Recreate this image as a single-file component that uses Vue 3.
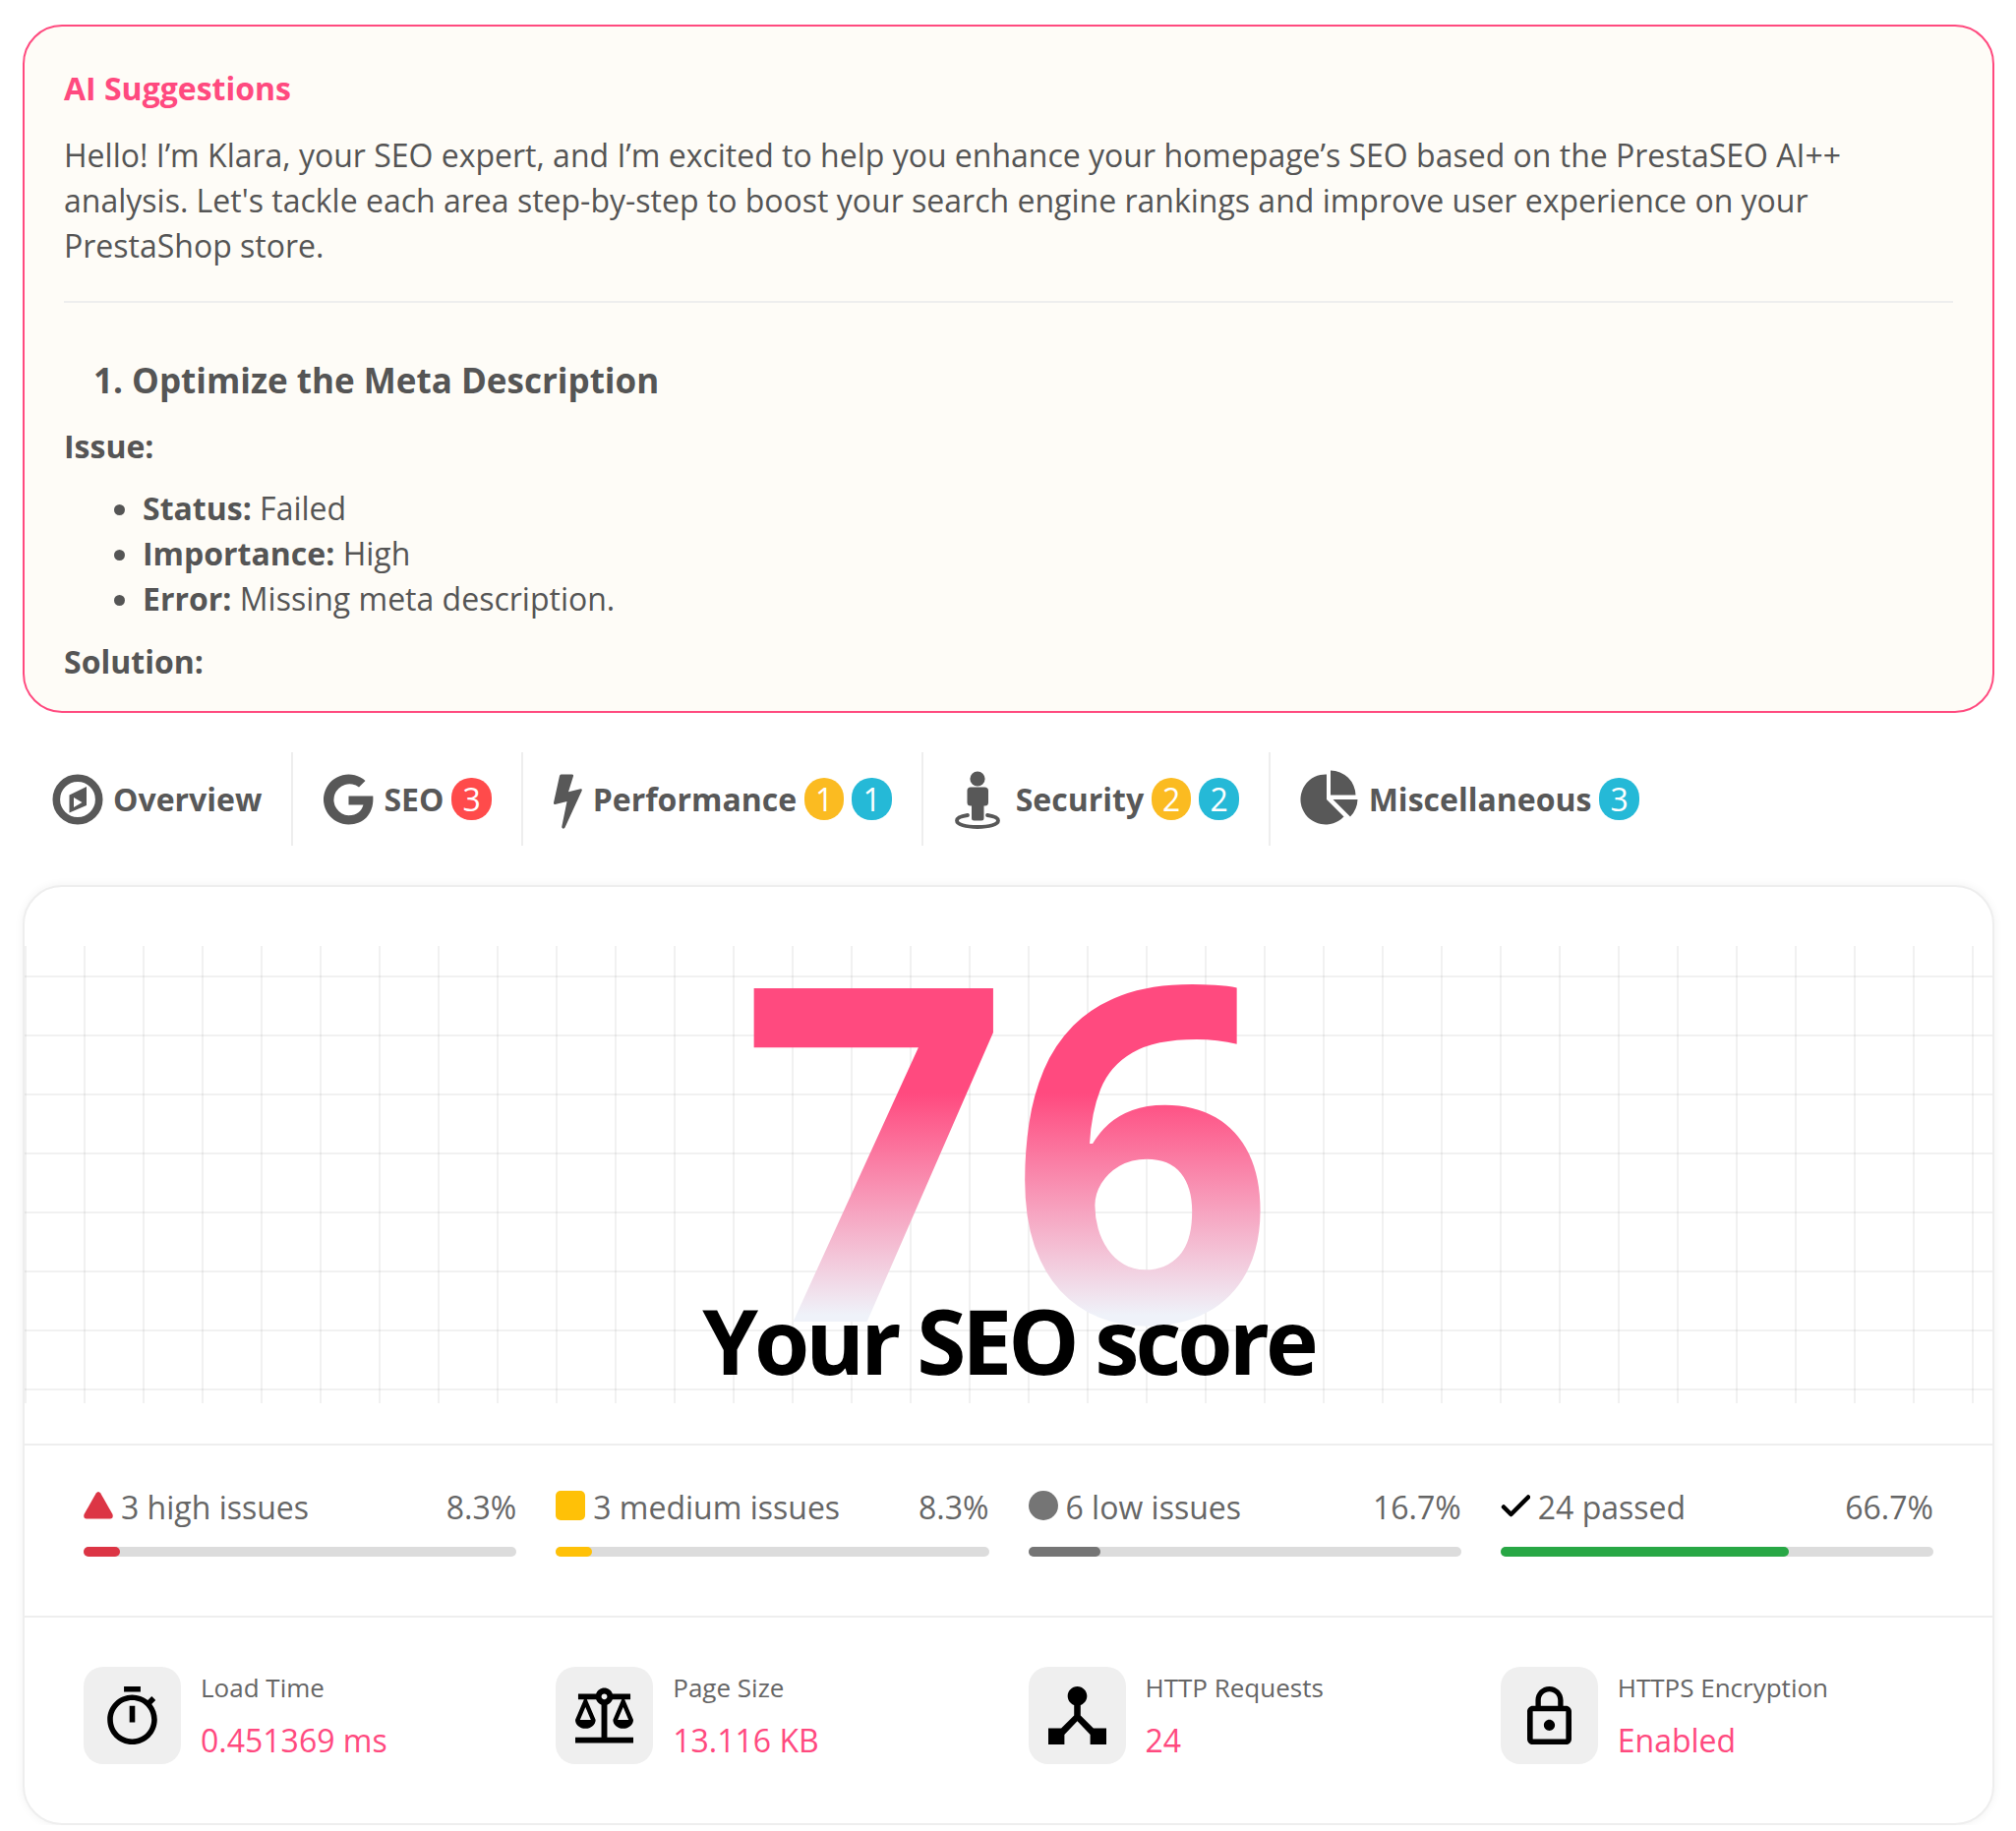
<script setup>
const facts = [
  { label: 'Status:', value: 'Failed' },
  { label: 'Importance:', value: 'High' },
  { label: 'Error:', value: 'Missing meta description.' },
]

const tabs = [
  { name: 'Overview', icon: 'compass', badges: [] },
  { name: 'SEO', icon: 'google', badges: [{ tone: 'red', count: 3 }] },
  { name: 'Performance', icon: 'bolt', badges: [{ tone: 'amber', count: 1 }, { tone: 'cyan', count: 1 }] },
  { name: 'Security', icon: 'person', badges: [{ tone: 'amber', count: 2 }, { tone: 'cyan', count: 2 }] },
  { name: 'Miscellaneous', icon: 'pie', badges: [{ tone: 'cyan', count: 3 }] },
]

const issues = [
  { key: 'high', label: '3 high issues', percent: 8.3 },
  { key: 'medium', label: '3 medium issues', percent: 8.3 },
  { key: 'low', label: '6 low issues', percent: 16.7 },
  { key: 'passed', label: '24 passed', percent: 66.7 },
]

const metrics = [
  {
    label: 'Load Time',
    value: '0.451369 ms',
    box: '1.5 1 21 21',
    path: 'M15 1H9v2h6V1zm-4 13h2V8h-2v6zm8.03-6.61l1.42-1.42c-.43-.51-.9-.99-1.41-1.41l-1.42 1.42C16.07 4.74 14.12 4 12 4c-4.97 0-9 4.03-9 9s4.02 9 9 9 9-4.03 9-9c0-2.12-.74-4.07-1.97-5.61zM12 20c-3.87 0-7-3.13-7-7s3.13-7 7-7 7 3.13 7 7-3.13 7-7 7z',
  },
  {
    label: 'Page Size',
    value: '13.116 KB',
    box: '2 1.5 20 20',
    path: 'M13 7.83c.85-.3 1.53-.98 1.83-1.83H18l-3 7c0 1.66 1.57 3 3.5 3s3.5-1.34 3.5-3l-3-7h2V4h-6.17c-.41-1.17-1.52-2-2.83-2s-2.42.83-2.83 2H3v2h2l-3 7c0 1.66 1.57 3 3.5 3S9 14.66 9 13L6 6h3.17c.3.85.98 1.53 1.83 1.83V19H2v2h20v-2h-9V7.83zM20.37 13h-3.74l1.87-4.36L20.37 13zm-13 0H3.63L5.5 8.64 7.37 13zM12 6c-.55 0-1-.45-1-1s.45-1 1-1 1 .45 1 1-.45 1-1 1z',
  },
  {
    label: 'HTTP Requests',
    value: '24',
    box: '3 3 18 18',
    path: 'M17 16l-4-4V8.82C14.16 8.4 15 7.3 15 6c0-1.66-1.34-3-3-3S9 4.34 9 6c0 1.3.84 2.4 2 2.82V12l-4 4H3v5h5v-3.05l4-4.2 4 4.2V21h5v-5h-4z',
  },
  {
    label: 'HTTPS Encryption',
    value: 'Enabled',
    box: '1.5 1 21 21',
    path: 'M12 17c1.1 0 2-.9 2-2s-.9-2-2-2-2 .9-2 2 .9 2 2 2zm6-9h-1V6c0-2.76-2.24-5-5-5S7 3.24 7 6v2H6c-1.1 0-2 .9-2 2v10c0 1.1.9 2 2 2h12c1.1 0 2-.9 2-2V10c0-1.1-.9-2-2-2zM8.9 6c0-1.71 1.39-3.1 3.1-3.1s3.1 1.39 3.1 3.1v2H8.9V6zM18 20H6V10h12v10z',
  },
]
</script>

<template>
  <main class="page">
    <section class="suggestions">
      <h2>AI Suggestions</h2>
      <p>
        Hello! I’m Klara, your SEO expert, and I’m excited to help you enhance your homepage’s SEO
        based on the PrestaSEO AI++ analysis. Let's tackle each area step-by-step to boost your
        search engine rankings and improve user experience on your PrestaShop store.
      </p>
      <hr />
      <h3>1. Optimize the Meta Description</h3>
      <p><strong>Issue:</strong></p>
      <ul>
        <li v-for="fact in facts" :key="fact.label">
          <strong>{{ fact.label }}</strong> {{ fact.value }}
        </li>
      </ul>
      <p><strong>Solution:</strong></p>
    </section>

    <nav class="tabs">
      <button v-for="tab in tabs" :key="tab.name" type="button" class="tab">
        <svg v-if="tab.icon === 'compass'" class="icon" width="52" height="60" viewBox="0 0 52 60" aria-hidden="true">
          <circle cx="26" cy="30" r="21.7" fill="none" stroke="currentColor" stroke-width="7.6" />
          <path fill="currentColor" fill-rule="evenodd" d="M35 17v19L17.500 43.500V25.500zM22 28v10l8.500-5z" />
        </svg>
        <svg v-else-if="tab.icon === 'google'" class="icon" width="52" height="60" viewBox="0 0 52 60" aria-hidden="true">
          <path fill="currentColor" d="M26.500 26.500H51.300C52.500 43.500 43 55.500 26.500 55.500A25.500 25.500 0 1 1 43.500 11L37 17.500A16 16 0 1 0 26.500 46.300C35 46.300 39.500 42 41.500 35.500H26.500z" />
        </svg>
        <svg v-else-if="tab.icon === 'bolt'" class="icon" width="31" height="60" viewBox="0 0 31 60" aria-hidden="true">
          <path fill="currentColor" d="M8.500 4.500H19.800Q21.600 4.500 21 6.300L16 22.200L28.300 19.200Q30.500 18.800 29.700 20.900L12.500 58.600Q11.700 60 10.300 59.600Q9 59.200 9.300 57.600L14.500 32L2.500 35Q.6 35.300 1 33.300L7 6Q7.300 4.500 8.500 4.500z" />
        </svg>
        <svg v-else-if="tab.icon === 'person'" class="icon" width="54" height="60" viewBox="0 0 54 60" aria-hidden="true">
          <circle cx="25" cy="9" r="7.600" fill="currentColor" />
          <path fill="currentColor" d="M18 17.500H32Q36 17.500 36 21V33Q36 36.500 32.500 36.500H31.500V49Q31.500 51.500 29 51.500H21.500Q19 51.500 19 49V36.500H18Q14.500 36.500 14.500 33V21Q14.500 17.500 18 17.500z" />
          <path fill="none" stroke="currentColor" stroke-width="3.800" stroke-linecap="round" d="M15 46C8 47 4 49 4 51.500C4 55.500 13 58 25 58S46 55.500 46 51.500C46 49 42 47 35 46" />
        </svg>
        <svg v-else class="icon" width="60" height="60" viewBox="0 0 60 60" aria-hidden="true">
          <path fill="currentColor" d="M27 4.500V30L44.500 47.500A25.500 25.500 0 1 1 27 4.500zM31 .500A25.500 25.500 0 0 1 56.500 25.500H31zM33.500 30H58.500A26 26 0 0 1 51 47.500z" />
        </svg>
        <span>{{ tab.name }}<span v-for="badge in tab.badges" :key="badge.tone" class="badge" :class="badge.tone">{{ badge.count }}</span></span>
      </button>
    </nav>

    <section class="report">
      <div class="score">
        <div class="score-value">76</div>
        <h1>Your SEO score</h1>
      </div>

      <div class="issues">
        <div v-for="issue in issues" :key="issue.key" class="issue">
          <div class="issue-head">
            <svg v-if="issue.key === 'high'" width="30" height="30" viewBox="0 0 30 30" aria-hidden="true">
              <path fill="#dc3545" d="M12.700 2.500Q15 -.500 17.300 2.500L29.500 24Q30.500 28.500 27 28.500H3Q-.500 28.500 .500 24z" />
            </svg>
            <svg v-else-if="issue.key === 'medium'" width="30" height="30" viewBox="0 0 30 30" aria-hidden="true">
              <rect width="30" height="30" rx="5" fill="#ffc107" />
            </svg>
            <svg v-else-if="issue.key === 'low'" width="30" height="30" viewBox="0 0 30 30" aria-hidden="true">
              <circle cx="15" cy="15" r="15" fill="#757575" />
            </svg>
            <svg v-else width="30" height="30" viewBox="0 0 30 30" aria-hidden="true">
              <path fill="none" stroke="#000" stroke-width="4.500" stroke-linecap="round" stroke-linejoin="round" d="M3 16.500L10.500 24L28 6.500" />
            </svg>
            <span>{{ issue.label }}</span>
            <span class="percent">{{ issue.percent }}%</span>
          </div>
          <div class="bar">
            <div class="fill" :class="issue.key" :style="{ width: issue.percent + '%' }"></div>
          </div>
        </div>
      </div>

      <div class="metrics">
        <div v-for="metric in metrics" :key="metric.label" class="metric">
          <div class="metric-icon">
            <svg width="59" height="59" :viewBox="metric.box" aria-hidden="true"><path :d="metric.path" /></svg>
          </div>
          <div>
            <div class="metric-label">{{ metric.label }}</div>
            <div class="metric-value">{{ metric.value }}</div>
          </div>
        </div>
      </div>
    </section>
  </main>
</template>

<style>
body {
  margin: 0;
  background: #fff;
}
</style>

<style scoped>
.page {
  box-sizing: border-box;
  padding: 25px 22px 0 23px;
  font-family: "Open Sans", "Noto Sans", sans-serif;
  font-size: 32px;
  line-height: 46px;
  color: #555;
}

.suggestions {
  padding: 40px 40px 27px;
  border: 2px solid #ff4a7f;
  border-radius: 40px;
  background: #fefcf7;
}

.suggestions h2 {
  margin: 0 0 22px;
  font-size: 32px;
  font-weight: 700;
  color: #ff4a7f;
}

.suggestions p {
  margin: 0;
}

.suggestions hr {
  height: 2px;
  margin: 33px 0 56px;
  border: 0;
  background: #eee;
}

.suggestions h3 {
  margin: 0 0 21px;
  padding-left: 30px;
  font-size: 35px;
  font-weight: 700;
}

.suggestions ul {
  margin: 17px 0 18px;
  padding-left: 80px;
}

.tabs {
  display: flex;
  margin: 40px 0;
}

.tab {
  display: flex;
  align-items: center;
  height: 95px;
  padding: 0 30px;
  border: 0;
  border-right: 2px solid #eee;
  background: none;
  font: inherit;
  font-weight: 700;
  color: #585858;
  white-space: nowrap;
}

.tab:last-child {
  border-right: 0;
}

.icon {
  flex: none;
  margin-right: 10px;
}

.badge {
  margin-left: 8px;
  padding: 0 11px;
  border-radius: 20px;
  font-weight: 400;
  color: #fff;
}

.red {
  background: #ff4b4b;
}

.amber {
  background: #fbbb21;
}

.cyan {
  background: #25b9d7;
}

.report {
  border: 2px solid #eee;
  border-radius: 40px;
  background: #fff;
  box-shadow: 0 0 10px rgba(0, 0, 0, 0.06);
}

.score {
  margin: 60px 0 41px;
  padding-bottom: 2px;
  text-align: center;
  background-image:
    linear-gradient(90deg, rgba(0, 0, 0, 0.055) 2px, transparent 2px),
    linear-gradient(rgba(0, 0, 0, 0.055) 2px, transparent 2px);
  background-size: 60px 60px;
  background-position: 0 0, 0 30px;
}

.score-value {
  font-size: 475px;
  font-weight: 700;
  line-height: 395px;
  background: linear-gradient(#ff4a7f 38%, #eff2f9 95%);
  background-clip: text;
  color: transparent;
}

.score h1 {
  margin: -56px 0 0;
  font-size: 91px;
  font-weight: 700;
  line-height: 124px;
  letter-spacing: -4px;
  color: #000;
}

.issues,
.metrics {
  display: grid;
  grid-template-columns: repeat(4, 1fr);
  gap: 40px;
  border-top: 2px solid #eee;
}

.issues {
  padding: 40px 60px 60px;
  color: #666;
}

.issue-head {
  display: flex;
  align-items: center;
  gap: 8px;
}

.issue-head svg {
  flex: none;
  margin-bottom: 4px;
}

.percent {
  margin-left: auto;
}

.bar {
  height: 10px;
  margin-top: 17px;
  border-radius: 5px;
  background: #dcdcdc;
}

.fill {
  height: 10px;
  border-radius: 5px;
}

.fill.high {
  background: #dc3545;
}

.fill.medium {
  background: #ffc107;
}

.fill.low {
  background: #757575;
}

.fill.passed {
  background: #28a745;
}

.metrics {
  padding: 50px 60px 60px;
}

.metric {
  display: flex;
  align-items: center;
  gap: 20px;
}

.metric-icon {
  display: flex;
  flex: none;
  align-items: center;
  justify-content: center;
  width: 99px;
  height: 99px;
  border-radius: 20px;
  background: #efefef;
}

.metric-label {
  margin-bottom: 11px;
  font-size: 26px;
  line-height: 40px;
  color: #666;
}

.metric-value {
  color: #ff4a7f;
}
</style>
